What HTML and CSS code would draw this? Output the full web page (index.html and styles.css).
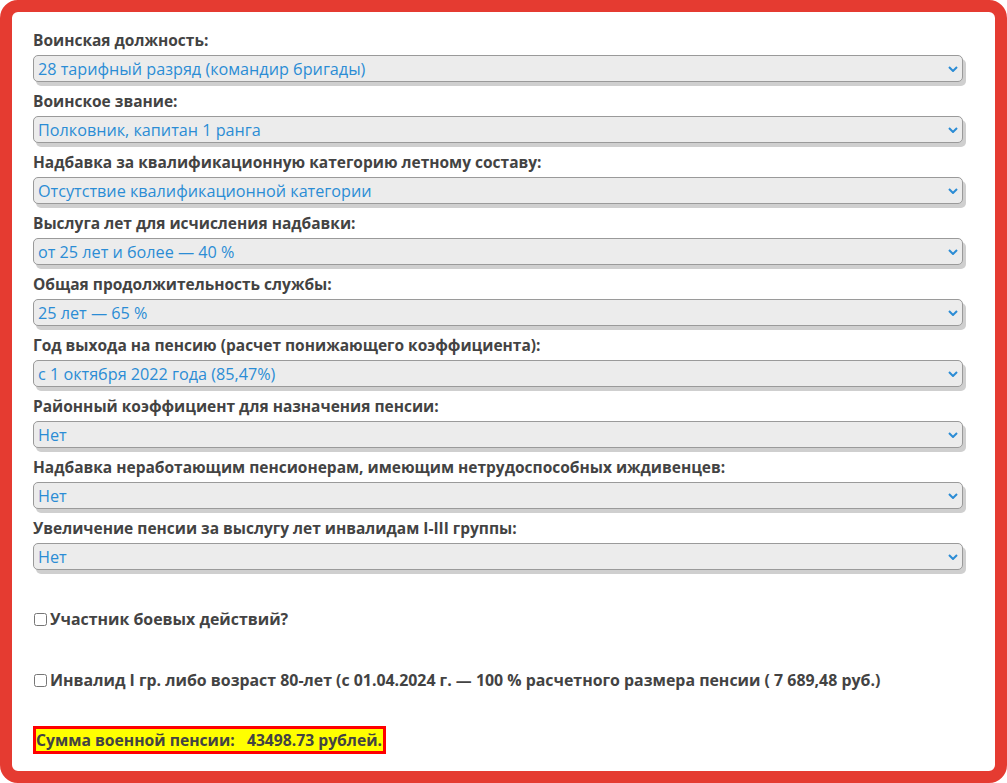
FILE: index.html
```html
<!DOCTYPE html>
<html lang="ru">
<head>
    <meta charset="UTF-8">
    <meta name="viewport" content="width=device-width, initial-scale=1.0">
    <title>Калькулятор военной пенсии</title>
    <link rel="stylesheet" href="styles.css">
</head>
<body>
    <div class="calc">
        <div class="form-group">
            <label for="position">Воинская должность:</label>
            <div class="select-wrap">
                <select id="position"><option>28 тарифный разряд (командир бригады)</option></select>
                <svg class="arrow" viewBox="0 0 10 6"><path d="M1 1l4 4 4-4"/></svg>
            </div>
        </div>
        <div class="form-group">
            <label for="rank">Воинское звание:</label>
            <div class="select-wrap">
                <select id="rank"><option>Полковник, капитан 1 ранга</option></select>
                <svg class="arrow" viewBox="0 0 10 6"><path d="M1 1l4 4 4-4"/></svg>
            </div>
        </div>
        <div class="form-group">
            <label for="category">Надбавка за квалификационную категорию летному составу:</label>
            <div class="select-wrap">
                <select id="category"><option>Отсутствие квалификационной категории</option></select>
                <svg class="arrow" viewBox="0 0 10 6"><path d="M1 1l4 4 4-4"/></svg>
            </div>
        </div>
        <div class="form-group">
            <label for="seniority">Выслуга лет для исчисления надбавки:</label>
            <div class="select-wrap">
                <select id="seniority"><option>от 25 лет и более — 40 %</option></select>
                <svg class="arrow" viewBox="0 0 10 6"><path d="M1 1l4 4 4-4"/></svg>
            </div>
        </div>
        <div class="form-group">
            <label for="service">Общая продолжительность службы:</label>
            <div class="select-wrap">
                <select id="service"><option>25 лет — 65 %</option></select>
                <svg class="arrow" viewBox="0 0 10 6"><path d="M1 1l4 4 4-4"/></svg>
            </div>
        </div>
        <div class="form-group">
            <label for="year">Год выхода на пенсию (расчет понижающего коэффициента):</label>
            <div class="select-wrap">
                <select id="year"><option>с 1 октября 2022 года (85,47%)</option></select>
                <svg class="arrow" viewBox="0 0 10 6"><path d="M1 1l4 4 4-4"/></svg>
            </div>
        </div>
        <div class="form-group">
            <label for="region">Районный коэффициент для назначения пенсии:</label>
            <div class="select-wrap">
                <select id="region"><option>Нет</option></select>
                <svg class="arrow" viewBox="0 0 10 6"><path d="M1 1l4 4 4-4"/></svg>
            </div>
        </div>
        <div class="form-group">
            <label for="dependents">Надбавка неработающим пенсионерам, имеющим нетрудоспособных иждивенцев:</label>
            <div class="select-wrap">
                <select id="dependents"><option>Нет</option></select>
                <svg class="arrow" viewBox="0 0 10 6"><path d="M1 1l4 4 4-4"/></svg>
            </div>
        </div>
        <div class="form-group">
            <label for="disabled">Увеличение пенсии за выслугу лет инвалидам I-III группы:</label>
            <div class="select-wrap">
                <select id="disabled"><option>Нет</option></select>
                <svg class="arrow" viewBox="0 0 10 6"><path d="M1 1l4 4 4-4"/></svg>
            </div>
        </div>

        <label class="check first"><input type="checkbox" id="veteran">Участник боевых действий?</label>
        <label class="check"><input type="checkbox" id="invalid">Инвалид I гр. либо возраст 80-лет (с 01.04.2024 г. — 100 % расчетного размера пенсии ( 7 689,48 руб.)</label>

        <div class="result"><span id="total">Сумма военной пенсии:&nbsp;&nbsp; 43498.73 рублей.</span></div>
    </div>
</body>
</html>
```

FILE: styles.css
```css
body {
    margin: 0;
    background: #fff;
    font-family: "Open Sans", Roboto, sans-serif;
    color: #434343;
}
.calc {
    box-sizing: border-box;
    height: 783px;
    border: 12px solid #e53b31;
    border-radius: 18px;
    padding: 17px 32px 0 21px;
}
.form-group {
    margin-bottom: 8px;
}
.form-group label {
    display: block;
    font-weight: bold;
    font-size: 15.5px;
    line-height: 22px;
    margin-bottom: 4px;
}
.select-wrap {
    position: relative;
}
.select-wrap select {
    -webkit-appearance: none;
    appearance: none;
    display: block;
    width: 100%;
    height: 27px;
    margin: 0;
    padding: 0 24px 0 4px;
    font-family: inherit;
    font-size: 16.2px;
    color: #2b8cd5;
    background: #ececec;
    border: 1px solid #9a9a9a;
    border-radius: 5px;
    box-shadow: 3px 4px 0 #cfcfcf;
}
.select-wrap .arrow {
    position: absolute;
    right: 5px;
    top: 11px;
    width: 10px;
    height: 6px;
    pointer-events: none;
}
.arrow path {
    fill: none;
    stroke: #2b8cd5;
    stroke-width: 2;
}
.check {
    display: flex;
    align-items: center;
    font-weight: bold;
    font-size: 15.9px;
    line-height: 22px;
    margin-top: 39px;
}
.check.first {
    margin-top: 38px;
}
.check input {
    width: 13px;
    height: 13px;
    margin: 0 3px 0 1px;
}
.result {
    margin-top: 35px;
}
.result span {
    display: inline-block;
    font-weight: bold;
    font-size: 15.7px;
    line-height: 22px;
    background: #ffff00;
    border: 3px solid #ff0000;
    padding: 0 1px 0 0;
}
```
